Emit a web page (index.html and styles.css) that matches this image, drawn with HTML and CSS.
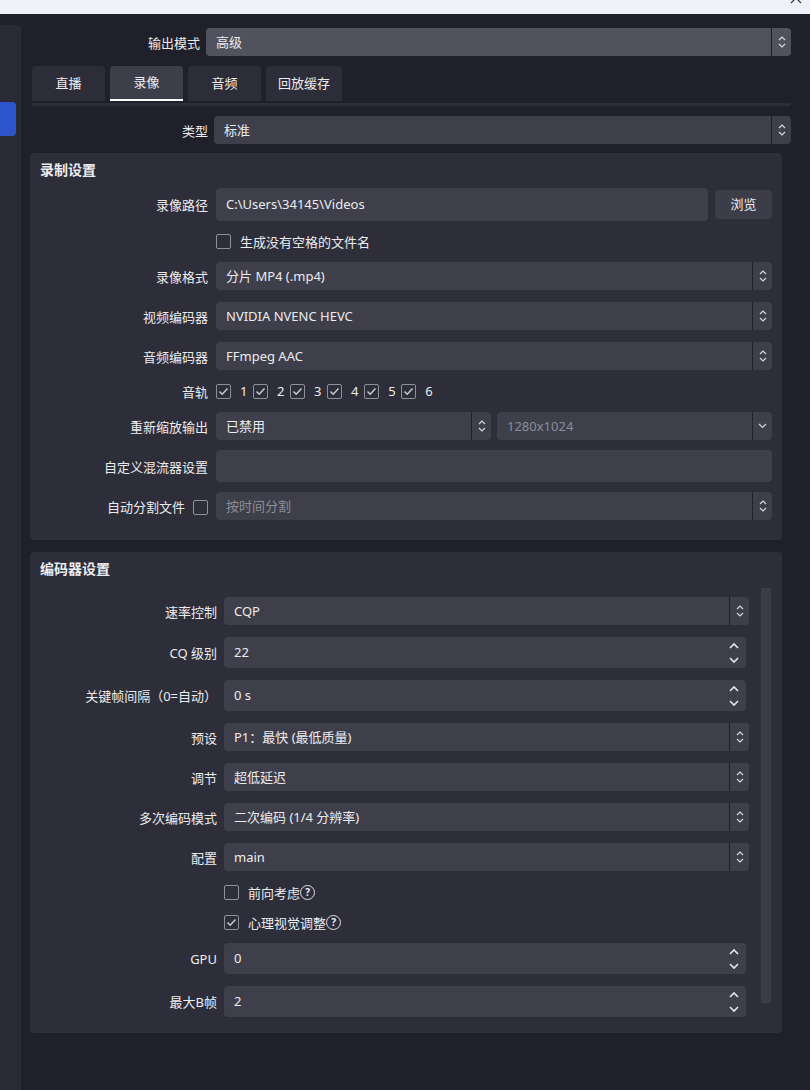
FILE: index.html
```html
<!DOCTYPE html>
<html lang="zh-CN">

<head>
    <meta charset="UTF-8">
    <meta name="viewport" content="width=device-width, initial-scale=1.0">
    <title>输出设置</title>
    <link rel="stylesheet" href="styles.css">
</head>

<body>
    <!-- 标题栏 -->
    <div class="titlebar">
        <svg class="close" width="12" height="12" viewBox="0 0 12 12">
            <path d="M1 1 L11 11 M11 1 L1 11" stroke="#333" stroke-width="1.2" fill="none" />
        </svg>
    </div>

    <div class="window">
        <div class="sidebar">
            <div class="side-active"></div>
        </div>

        <div class="main">
            <div class="row top-row">
                <div class="lbl">输出模式</div>
                <div class="combo combo-hl">
                    <span class="combo-text">高级</span>
                    <span class="combo-btn">
                        <svg width="8" height="14" viewBox="0 0 8 14"><polyline points="1,5 4,2 7,5" /><polyline points="1,9 4,12 7,9" /></svg>
                    </span>
                </div>
            </div>

            <!-- 选项卡 -->
            <ul class="tabs">
                <li class="tab">直播</li>
                <li class="tab active">录像</li>
                <li class="tab">音频</li>
                <li class="tab wide">回放缓存</li>
            </ul>
            <div class="tab-line"></div>

            <div class="row type-row">
                <div class="lbl">类型</div>
                <div class="combo">
                    <span class="combo-text">标准</span>
                    <span class="combo-btn">
                        <svg width="8" height="14" viewBox="0 0 8 14"><polyline points="1,5 4,2 7,5" /><polyline points="1,9 4,12 7,9" /></svg>
                    </span>
                </div>
            </div>

            <!-- 录制设置 -->
            <div class="group rec">
                <div class="group-title">录制设置</div>
                <div class="rows">
                    <div class="row">
                        <div class="lbl">录像路径</div>
                        <div class="field path-field">
                            <div class="input tall">C:\Users\34145\Videos</div>
                            <div class="btn">浏览</div>
                        </div>
                    </div>
                    <div class="row check-row">
                        <div class="lbl"></div>
                        <div class="field">
                            <span class="cb"></span>
                            <span class="cb-text">生成没有空格的文件名</span>
                        </div>
                    </div>
                    <div class="row">
                        <div class="lbl">录像格式</div>
                        <div class="combo">
                            <span class="combo-text">分片 MP4 (.mp4)</span>
                            <span class="combo-btn"><svg width="8" height="14" viewBox="0 0 8 14"><polyline points="1,5 4,2 7,5" /><polyline points="1,9 4,12 7,9" /></svg></span>
                        </div>
                    </div>
                    <div class="row">
                        <div class="lbl">视频编码器</div>
                        <div class="combo">
                            <span class="combo-text">NVIDIA NVENC HEVC</span>
                            <span class="combo-btn"><svg width="8" height="14" viewBox="0 0 8 14"><polyline points="1,5 4,2 7,5" /><polyline points="1,9 4,12 7,9" /></svg></span>
                        </div>
                    </div>
                    <div class="row">
                        <div class="lbl">音频编码器</div>
                        <div class="combo">
                            <span class="combo-text">FFmpeg AAC</span>
                            <span class="combo-btn"><svg width="8" height="14" viewBox="0 0 8 14"><polyline points="1,5 4,2 7,5" /><polyline points="1,9 4,12 7,9" /></svg></span>
                        </div>
                    </div>
                    <div class="row tracks-row">
                        <div class="lbl">音轨</div>
                        <div class="field tracks">
                            <span class="track"><span class="cb checked"><svg width="13" height="13" viewBox="0 0 13 13"><polyline points="2.5,6.5 5.2,9.2 10.5,3.5" /></svg></span>1</span>
                            <span class="track"><span class="cb checked"><svg width="13" height="13" viewBox="0 0 13 13"><polyline points="2.5,6.5 5.2,9.2 10.5,3.5" /></svg></span>2</span>
                            <span class="track"><span class="cb checked"><svg width="13" height="13" viewBox="0 0 13 13"><polyline points="2.5,6.5 5.2,9.2 10.5,3.5" /></svg></span>3</span>
                            <span class="track"><span class="cb checked"><svg width="13" height="13" viewBox="0 0 13 13"><polyline points="2.5,6.5 5.2,9.2 10.5,3.5" /></svg></span>4</span>
                            <span class="track"><span class="cb checked"><svg width="13" height="13" viewBox="0 0 13 13"><polyline points="2.5,6.5 5.2,9.2 10.5,3.5" /></svg></span>5</span>
                            <span class="track"><span class="cb checked"><svg width="13" height="13" viewBox="0 0 13 13"><polyline points="2.5,6.5 5.2,9.2 10.5,3.5" /></svg></span>6</span>
                        </div>
                    </div>
                    <div class="row">
                        <div class="lbl">重新缩放输出</div>
                        <div class="field pair">
                            <div class="combo">
                                <span class="combo-text">已禁用</span>
                                <span class="combo-btn"><svg width="8" height="14" viewBox="0 0 8 14"><polyline points="1,5 4,2 7,5" /><polyline points="1,9 4,12 7,9" /></svg></span>
                            </div>
                            <div class="combo disabled">
                                <span class="combo-text">1280x1024</span>
                                <span class="combo-btn"><svg width="9" height="6" viewBox="0 0 9 6"><polyline points="1,1 4.5,4.5 8,1" /></svg></span>
                            </div>
                        </div>
                    </div>
                    <div class="row tight">
                        <div class="lbl">自定义混流器设置</div>
                        <div class="input mux"></div>
                    </div>
                    <div class="row tight">
                        <div class="lbl">自动分割文件<span class="cb"></span></div>
                        <div class="combo disabled">
                            <span class="combo-text">按时间分割</span>
                            <span class="combo-btn"><svg width="8" height="14" viewBox="0 0 8 14"><polyline points="1,5 4,2 7,5" /><polyline points="1,9 4,12 7,9" /></svg></span>
                        </div>
                    </div>
                </div>
            </div>

            <!-- 编码器设置 -->
            <div class="group enc">
                <div class="group-title">编码器设置</div>
                <div class="scroll">
                    <div class="rows">
                        <div class="row">
                            <div class="lbl">速率控制</div>
                            <div class="combo">
                                <span class="combo-text">CQP</span>
                                <span class="combo-btn"><svg width="8" height="14" viewBox="0 0 8 14"><polyline points="1,5 4,2 7,5" /><polyline points="1,9 4,12 7,9" /></svg></span>
                            </div>
                        </div>
                        <div class="row">
                            <div class="lbl">CQ 级别</div>
                            <div class="spin">
                                <span class="combo-text">22</span>
                                <span class="spin-btn"><svg width="10" height="22" viewBox="0 0 10 22"><polyline points="1,6 5,2 9,6" /><polyline points="1,16 5,20 9,16" /></svg></span>
                            </div>
                        </div>
                        <div class="row">
                            <div class="lbl">关键帧间隔（0=自动）</div>
                            <div class="spin">
                                <span class="combo-text">0 s</span>
                                <span class="spin-btn"><svg width="10" height="22" viewBox="0 0 10 22"><polyline points="1,6 5,2 9,6" /><polyline points="1,16 5,20 9,16" /></svg></span>
                            </div>
                        </div>
                        <div class="row">
                            <div class="lbl">预设</div>
                            <div class="combo">
                                <span class="combo-text">P1：最快 (最低质量)</span>
                                <span class="combo-btn"><svg width="8" height="14" viewBox="0 0 8 14"><polyline points="1,5 4,2 7,5" /><polyline points="1,9 4,12 7,9" /></svg></span>
                            </div>
                        </div>
                        <div class="row">
                            <div class="lbl">调节</div>
                            <div class="combo">
                                <span class="combo-text">超低延迟</span>
                                <span class="combo-btn"><svg width="8" height="14" viewBox="0 0 8 14"><polyline points="1,5 4,2 7,5" /><polyline points="1,9 4,12 7,9" /></svg></span>
                            </div>
                        </div>
                        <div class="row">
                            <div class="lbl">多次编码模式</div>
                            <div class="combo">
                                <span class="combo-text">二次编码 (1/4 分辨率)</span>
                                <span class="combo-btn"><svg width="8" height="14" viewBox="0 0 8 14"><polyline points="1,5 4,2 7,5" /><polyline points="1,9 4,12 7,9" /></svg></span>
                            </div>
                        </div>
                        <div class="row">
                            <div class="lbl">配置</div>
                            <div class="combo">
                                <span class="combo-text">main</span>
                                <span class="combo-btn"><svg width="8" height="14" viewBox="0 0 8 14"><polyline points="1,5 4,2 7,5" /><polyline points="1,9 4,12 7,9" /></svg></span>
                            </div>
                        </div>
                        <div class="row opt-row">
                            <div class="lbl"></div>
                            <div class="field">
                                <span class="cb"></span>
                                <span class="cb-text">前向考虑</span><span class="help">?</span>
                            </div>
                        </div>
                        <div class="row opt-row">
                            <div class="lbl"></div>
                            <div class="field">
                                <span class="cb checked"><svg width="13" height="13" viewBox="0 0 13 13"><polyline points="2.5,6.5 5.2,9.2 10.5,3.5" /></svg></span>
                                <span class="cb-text">心理视觉调整</span><span class="help">?</span>
                            </div>
                        </div>
                        <div class="row">
                            <div class="lbl">GPU</div>
                            <div class="spin">
                                <span class="combo-text">0</span>
                                <span class="spin-btn"><svg width="10" height="22" viewBox="0 0 10 22"><polyline points="1,6 5,2 9,6" /><polyline points="1,16 5,20 9,16" /></svg></span>
                            </div>
                        </div>
                        <div class="row">
                            <div class="lbl">最大B帧</div>
                            <div class="spin">
                                <span class="combo-text">2</span>
                                <span class="spin-btn"><svg width="10" height="22" viewBox="0 0 10 22"><polyline points="1,6 5,2 9,6" /><polyline points="1,16 5,20 9,16" /></svg></span>
                            </div>
                        </div>
                    </div>
                    <div class="scrollbar">
                        <div class="handle"></div>
                    </div>
                </div>
            </div>
        </div>
    </div>
</body>

</html>
```

FILE: styles.css
```css
* {
    margin: 0;
    padding: 0;
    box-sizing: border-box;
}

li {
    list-style: none;
}

body {
    width: 810px;
    height: 1090px;
    overflow: hidden;
    background-color: #1f2029;
    color: #ececf0;
    font-family: "Noto Sans", "Noto Sans CJK SC", sans-serif;
    font-size: 13px;
}

/* 标题栏 */
.titlebar {
    height: 14px;
    background-color: #eef2f8;
    display: flex;
    justify-content: flex-end;
    padding-right: 8px;
    overflow: hidden;
}

.titlebar .close {
    margin-top: -8px;
}

.window {
    display: flex;
    height: 1076px;
}

.sidebar {
    width: 21px;
    margin-top: 11px;
    background-color: #292a35;
    border-top-right-radius: 4px;
}

.side-active {
    width: 16px;
    height: 34px;
    margin-top: 77px;
    background-color: #2f55cc;
    border-radius: 0 4px 4px 0;
}

.main {
    flex: 1;
    padding: 14px 19px 0 9px;
}

.row {
    display: flex;
    align-items: center;
}

.lbl {
    flex-shrink: 0;
    text-align: right;
    white-space: nowrap;
}

.top-row .lbl {
    width: 170px;
    margin-right: 6px;
}

.type-row {
    margin-top: 10px;
}

.type-row .lbl {
    width: 178px;
    margin-right: 6px;
}

/* 下拉框 */
.combo,
.spin {
    flex: 1;
    display: flex;
    height: 28px;
    background-color: #3e3f4b;
    border-radius: 4px;
    overflow: hidden;
}

.combo-hl {
    background-color: #50535d;
}

.combo-text {
    flex: 1;
    padding-left: 10px;
    line-height: 28px;
    white-space: nowrap;
}

.combo-btn {
    width: 20px;
    border-left: 1px solid #1f2029;
    display: flex;
    align-items: center;
    justify-content: center;
}

.combo-btn svg polyline {
    fill: none;
    stroke: #d6d7de;
    stroke-width: 1.2;
}

.disabled .combo-text {
    color: #8c8d96;
}

.spin {
    height: 31px;
    margin-right: 3px;
}

.spin .combo-text {
    line-height: 31px;
}

.spin-btn {
    width: 24px;
    display: flex;
    align-items: center;
    justify-content: center;
}

.spin-btn svg polyline {
    fill: none;
    stroke: #e4e5ea;
    stroke-width: 1.6;
}

/* 选项卡 */
.tabs {
    display: flex;
    gap: 5px;
    margin-top: 10px;
    padding-left: 2px;
}

.tab {
    width: 73px;
    height: 35px;
    line-height: 35px;
    text-align: center;
    background-color: #2c2d38;
    border-radius: 4px 4px 0 0;
}

.tab.wide {
    width: 76px;
}

.tab.active {
    background-color: #3c3e4a;
    line-height: 33px;
    border-bottom: 2px solid #ffffff;
}

.tab-line {
    margin: 2px 0 0 2px;
    height: 3px;
    background-color: #2c2d38;
}

/* 分组 */
.group {
    margin-right: 9px;
    background-color: #2d2e39;
    border-radius: 4px;
}

.rec {
    margin-top: 9px;
    padding: 0 10px 20px 10px;
}

.enc {
    margin-top: 12px;
    padding-bottom: 16px;
}

.group-title {
    height: 35px;
    line-height: 34px;
    font-size: 14px;
    font-weight: bold;
}

.enc .group-title {
    height: 36px;
    padding-left: 10px;
}

.rows {
    display: flex;
    flex-direction: column;
    gap: 12px;
}

.rec .lbl {
    width: 168px;
    margin-right: 8px;
}

.row.tight {
    margin-top: -2px;
}

.field {
    flex: 1;
    display: flex;
    align-items: center;
}

.input {
    height: 28px;
    line-height: 28px;
    padding-left: 10px;
    background-color: #3e3f4b;
    border-radius: 4px;
}

.input.tall {
    flex: 1;
    height: 33px;
    line-height: 33px;
}

.input.mux {
    flex: 1;
    height: 32px;
}

.btn {
    width: 57px;
    height: 29px;
    line-height: 29px;
    margin-left: 7px;
    text-align: center;
    background-color: #3c3d49;
    border-radius: 4px;
}

.pair {
    gap: 6px;
}

/* 复选框 */
.cb {
    flex-shrink: 0;
    display: inline-flex;
    align-items: center;
    justify-content: center;
    width: 15px;
    height: 15px;
    border: 1.5px solid #8e9099;
    border-radius: 2px;
}

.cb svg polyline {
    fill: none;
    stroke: #c9cad1;
    stroke-width: 1.5;
}

.cb-text {
    margin-left: 9px;
}

.check-row {
    height: 17px;
}

.tracks-row {
    height: 18px;
}

.tracks {
    gap: 5.6px;
}

.track {
    display: flex;
    align-items: center;
    gap: 9px;
}

.rec .lbl .cb {
    vertical-align: middle;
    margin-left: 8px;
    margin-top: -2px;
}

.help {
    display: inline-block;
    width: 15px;
    height: 15px;
    line-height: 12px;
    border: 1.5px solid #e2e3e8;
    border-radius: 50%;
    text-align: center;
    font-size: 10px;
    font-weight: bold;
}

.opt-row {
    height: 18px;
}

/* 滚动区 */
.scroll {
    display: flex;
}

.scroll .rows {
    flex: 1;
    padding: 9px 12px 0 10px;
}

.enc .lbl {
    width: 177px;
    margin-right: 7px;
}

.scrollbar {
    width: 10px;
    margin-right: 11px;
}

.handle {
    height: 415px;
    background-color: #3b3c48;
}
```
